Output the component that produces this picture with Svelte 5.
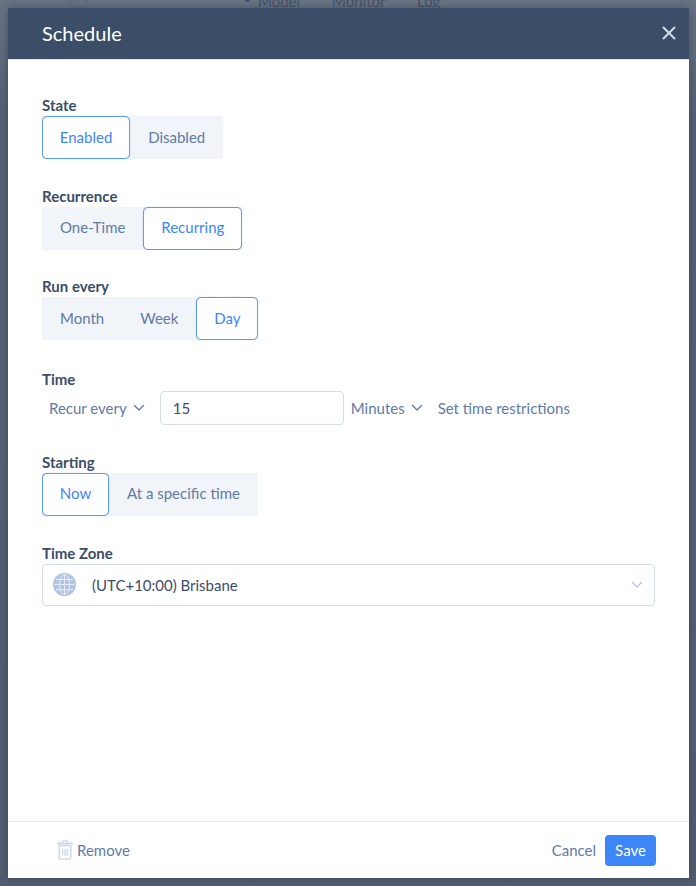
<script>
  const sections = [
    { label: 'State', options: ['Enabled', 'Disabled'], active: 'Enabled' },
    { label: 'Recurrence', options: ['One-Time', 'Recurring'], active: 'Recurring' },
    { label: 'Run every', options: ['Month', 'Week', 'Day'], active: 'Day' }
  ]
  const starting = ['Now', 'At a specific time']
</script>

{#snippet segments(options, active)}
  <div class="segments">
    {#each options as opt}
      <button class="segment" class:active={opt === active}>{opt}</button>
    {/each}
  </div>
{/snippet}

{#snippet chevron()}
  <svg class="chevron" width="12" height="8" viewBox="0 0 12 8" fill="none">
    <path d="M1.5 1.5 6 6l4.5-4.5" stroke="currentColor" stroke-width="1.4" stroke-linecap="round" stroke-linejoin="round" />
  </svg>
{/snippet}

<div class="page">
  <div class="behind top">
    <span class="ring"></span>
    <span class="dot"></span>
    <span class="model">Model</span>
    <span class="monitor">Monitor</span>
    <span class="log">Log</span>
  </div>

  <div class="modal">
    <header>
      <h2>Schedule</h2>
      <svg class="close" width="14" height="14" viewBox="0 0 14 14" fill="none">
        <path d="M1.5 1.5l11 11M12.5 1.5l-11 11" stroke="#d3dcec" stroke-width="2" stroke-linecap="round" />
      </svg>
    </header>

    <div class="body">
      {#each sections as s}
        <section>
          <div class="label">{s.label}</div>
          {@render segments(s.options, s.active)}
        </section>
      {/each}

      <section class="time">
        <div class="label">Time</div>
        <div class="time-row">
          <span class="drop recur">Recur every {@render chevron()}</span>
          <input class="num" value="15" />
          <span class="drop minutes">Minutes {@render chevron()}</span>
          <span class="link">Set time restrictions</span>
        </div>
      </section>

      <section>
        <div class="label">Starting</div>
        {@render segments(starting, 'Now')}
      </section>

      <section>
        <div class="label">Time Zone</div>
        <div class="select">
          <svg class="globe" width="23" height="23" viewBox="0 0 23 23" fill="none">
            <circle cx="11.5" cy="11.5" r="11.5" fill="#b3c5e3" />
            <g stroke="#e6ecf6" stroke-width="1">
              <ellipse cx="11.5" cy="11.5" rx="5" ry="10" />
              <path d="M11.5 1v21M1.5 11.5h20M3 6.5h17M3 16.5h17" />
            </g>
          </svg>
          <span class="zone">(UTC+10:00) Brisbane</span>
          <svg class="zone-chevron" width="12" height="8" viewBox="0 0 12 8" fill="none">
            <path d="M1.5 1.5 6 6l4.5-4.5" stroke="#b3c5e3" stroke-width="1.4" stroke-linecap="round" stroke-linejoin="round" />
          </svg>
        </div>
      </section>
    </div>

    <footer>
      <span class="remove">
        <svg width="16" height="20" viewBox="0 0 16 20" fill="none">
          <path d="M5.5 2.6V1.6c0-.5.3-.8.8-.8h3.4c.5 0 .8.3.8.8v1" stroke="#c8d5ea" stroke-width="1.3" />
          <path d="M1 3.4h14" stroke="#c8d5ea" stroke-width="2" stroke-linecap="round" />
          <path d="M2.2 5.6h11.6v11.6c0 1.1-.8 1.9-1.9 1.9H4.1c-1.1 0-1.9-.8-1.9-1.9z" stroke="#c8d5ea" stroke-width="1.4" />
          <path d="M5.7 8.8v7M8 8.8v7M10.3 8.8v7" stroke="#c8d5ea" stroke-width="1.2" />
        </svg>
        Remove
      </span>
      <div class="actions">
        <span class="cancel">Cancel</span>
        <button class="save">Save</button>
      </div>
    </footer>
  </div>
</div>

<style>
  :global(body) {
    margin: 0;
    background: #566274;
  }
  .page {
    position: relative;
    box-sizing: border-box;
    width: 696px;
    height: 886px;
    padding: 8px 7px 8px 8px;
    overflow: hidden;
    background: linear-gradient(#697484, #566274 12%, #525e70);
    font-family: Lato, "Open Sans", sans-serif;
    font-size: 15px;
    font-variant-ligatures: common-ligatures;
  }
  .behind {
    position: absolute;
    top: -9px;
    left: 0;
    color: #465267;
    font-size: 15px;
    line-height: 20px;
  }
  .behind span {
    position: absolute;
    top: 0;
  }
  .ring {
    left: 69px;
    width: 16px;
    height: 16px;
    border: 1px solid #596576;
    border-radius: 50%;
  }
  .dot {
    left: 245px;
    margin-top: 6px;
    width: 5px;
    height: 5px;
    border-radius: 50%;
    background: #3a4a66;
  }
  .model { left: 258px; }
  .monitor { left: 332px; }
  .log { left: 417px; }

  .modal {
    position: relative;
    display: flex;
    flex-direction: column;
    width: 681px;
    height: 870px;
    background: #fff;
    box-shadow: 0 0 8px rgba(30, 40, 55, 0.45);
  }
  header {
    display: flex;
    align-items: center;
    justify-content: space-between;
    height: 52px;
    padding: 0 13px 2px 34px;
    background: #3c4d67;
    border-bottom: 1px solid #dfe5ee;
    box-sizing: border-box;
  }
  h2 {
    margin: 0;
    color: #fff;
    font-size: 20px;
    font-weight: 400;
  }
  .body {
    flex: 1;
    padding: 35px 34px 0;
  }
  section {
    margin-bottom: 26.7px;
  }
  section.time {
    margin-top: 28.6px;
    margin-bottom: 27px;
  }
  .label {
    height: 21px;
    line-height: 20px;
    color: #3c4d67;
    font-size: 15px;
    font-weight: 700;
  }
  .time .label {
    height: 22px;
  }
  .segments {
    display: inline-flex;
    vertical-align: top;
    background: #f1f4f9;
  }
  .segment {
    height: 43px;
    box-sizing: border-box;
    padding: 0 17px 2px;
    border: 1px solid transparent;
    border-radius: 5px;
    background: transparent;
    color: #5f7ba6;
    font: inherit;
    font-size: 15px;
  }
  .segment.active {
    padding: 0 16.8px 2px;
    border-color: #5a9afc;
    box-shadow: 0 0 1px rgba(90, 154, 252, 0.7);
    background: #fff;
    color: #3d86f8;
  }
  .time-row {
    display: flex;
    align-items: center;
    height: 34px;
    color: #5f7ba6;
  }
  .drop {
    display: inline-flex;
    align-items: center;
    gap: 6px;
  }
  .chevron {
    margin-top: 1px;
  }
  .recur {
    margin-left: 7px;
    margin-right: 15px;
  }
  .num {
    box-sizing: border-box;
    width: 184px;
    height: 34px;
    padding: 0 12px;
    border: 1px solid #d3dfef;
    border-radius: 4px;
    color: #3c4d67;
    font: inherit;
    font-size: 15px;
    outline: none;
  }
  .minutes {
    margin-left: 7px;
    margin-right: 15px;
  }
  .select {
    display: flex;
    align-items: center;
    box-sizing: border-box;
    height: 42px;
    padding: 0 11px 0 10px;
    border: 1px solid #d3dfef;
    border-radius: 4px;
    color: #3c4d67;
  }
  .zone {
    flex: 1;
    margin-left: 16px;
  }
  footer {
    display: flex;
    align-items: center;
    justify-content: space-between;
    box-sizing: border-box;
    height: 57px;
    padding: 0 33px 0 49px;
    border-top: 1px solid #e3e5e9;
    color: #5f7ba6;
  }
  .remove {
    display: inline-flex;
    align-items: center;
    gap: 4px;
  }
  .actions {
    display: flex;
    align-items: center;
    gap: 9px;
  }
  .save {
    width: 51px;
    height: 31px;
    padding: 0;
    border: 0;
    border-radius: 4px;
    background: #3d86f8;
    color: #fff;
    font: inherit;
    font-size: 15px;
  }
</style>
